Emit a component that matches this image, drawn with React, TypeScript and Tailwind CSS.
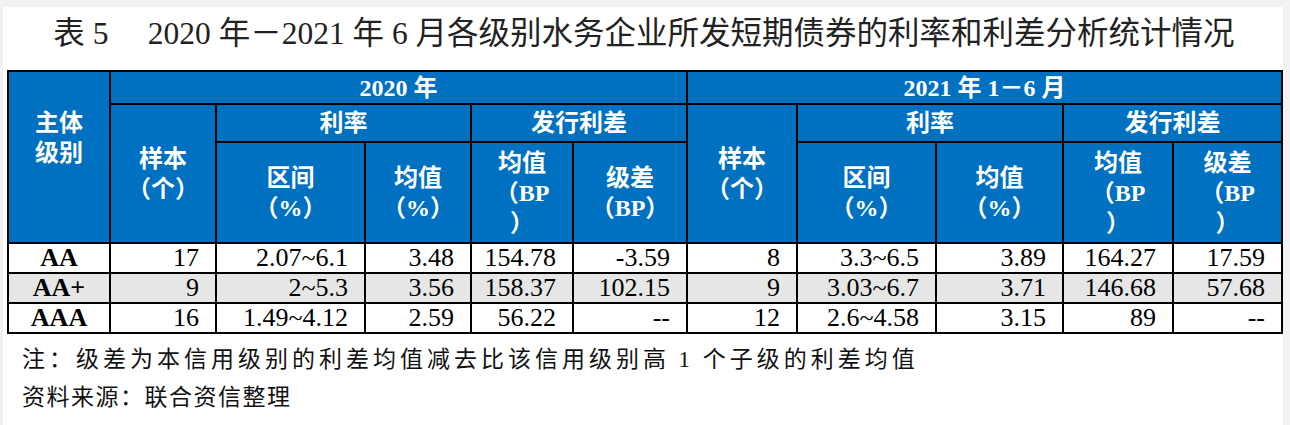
import React from 'react';

const serifCjk = { fontFamily: '"Liberation Serif", "Noto Sans CJK SC", sans-serif' };

interface Row {
  grade: string;
  a: string[];
  b: string[];
  shade?: boolean;
}

const rows: Row[] = [
  { grade: 'AA', a: ['17', '2.07~6.1', '3.48', '154.78', '-3.59'], b: ['8', '3.3~6.5', '3.89', '164.27', '17.59'] },
  { grade: 'AA+', a: ['9', '2~5.3', '3.56', '158.37', '102.15'], b: ['9', '3.03~6.7', '3.71', '146.68', '57.68'], shade: true },
  { grade: 'AAA', a: ['16', '1.49~4.12', '2.59', '56.22', '--'], b: ['12', '2.6~4.58', '3.15', '89', '--'] },
];

const widths = [102, 106, 149, 106, 102, 114, 110, 139, 127, 110, 109];

function H({ children, className = '', ...rest }: React.TdHTMLAttributes<HTMLTableCellElement>) {
  return (
    <th
      {...rest}
      className={`border-2 border-black bg-[#0070c0] text-white font-bold text-[24px] leading-[30px] text-center align-middle p-0 ${className}`}
    >
      {children}
    </th>
  );
}

export default function App() {
  return (
    <div className="w-[1290px] h-[425px] bg-[#f2f2f2] pt-[7px] pl-[3px] pr-[7px] overflow-hidden" style={serifCjk}>
      <div className="bg-white h-full pl-[4px] pr-[2px]">
        <h1 className="h-[63px] flex items-center justify-center text-[31.5px] text-[#222] pb-[10px]">
          表 5&nbsp;&nbsp;&nbsp;&nbsp;&nbsp;2020 年－2021 年 6 月各级别水务企业所发短期债券的利率和利差分析统计情况
        </h1>

        <table className="table-fixed border-collapse w-[1274px]">
          <colgroup>
            {widths.map((w, i) => (
              <col key={i} style={{ width: w }} />
            ))}
          </colgroup>
          <thead>
            <tr className="h-[33px]">
              <H rowSpan={3} className="align-top pt-[36px]">
                主体<br />级别
              </H>
              <H colSpan={5}>2020 年</H>
              <H colSpan={5}>2021 年 1－6 月</H>
            </tr>
            <tr className="h-[38px]">
              <H rowSpan={2}>
                样本<br />（个）
              </H>
              <H colSpan={2}>利率</H>
              <H colSpan={2}>发行利差</H>
              <H rowSpan={2}>
                样本<br />（个）
              </H>
              <H colSpan={2}>利率</H>
              <H colSpan={2}>发行利差</H>
            </tr>
            <tr className="h-[101px]">
              <H>
                区间<br />（%）
              </H>
              <H>
                均值<br />（%）
              </H>
              <H>
                均值<br />（BP<br />）
              </H>
              <H>
                级差<br />（BP）
              </H>
              <H>
                区间<br />（%）
              </H>
              <H>
                均值<br />（%）
              </H>
              <H>
                均值<br />（BP<br />）
              </H>
              <H>
                级差<br />（BP<br />）
              </H>
            </tr>
          </thead>
          <tbody>
            {rows.map((r) => (
              <tr key={r.grade} className={`h-[30px] ${r.shade ? 'bg-[#e6e6e6]' : 'bg-white'}`}>
                <td className="border-2 border-black text-center font-bold text-[26px] leading-[26px] p-0">{r.grade}</td>
                {[...r.a, ...r.b].map((v, i) => (
                  <td key={i} className="border-2 border-black text-right text-[26px] leading-[26px] p-0 pr-[16px]">
                    {v}
                  </td>
                ))}
              </tr>
            ))}
          </tbody>
        </table>

        <div className="pl-[15px] text-[23px] text-[#111]" style={{ fontFamily: '"Liberation Serif", "Noto Sans CJK SC", serif' }}>
          <p className="h-[40px] flex items-center mt-[6px] tracking-[4px]">注：级差为本信用级别的利差均值减去比该信用级别高&thinsp;1&thinsp;个子级的利差均值</p>
          <p className="h-[36px] flex items-center tracking-[1.5px]">资料来源：联合资信整理</p>
        </div>
      </div>
    </div>
  );
}
